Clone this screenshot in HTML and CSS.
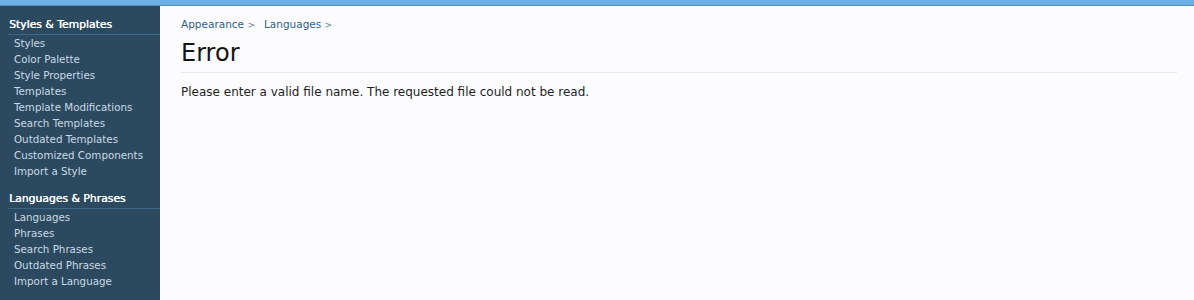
FILE: index.html
```html
<!DOCTYPE html>
<html>
<head>
<meta charset="utf-8">
<link rel="stylesheet" href="styles.css">
</head>
<body>
<div class="topbar"></div>
<div class="layout">
  <nav class="sidebar">
    <div class="section">
      <div class="section-title">Styles &amp; Templates</div>
      <ul class="links">
        <li>Styles</li>
        <li>Color Palette</li>
        <li>Style Properties</li>
        <li>Templates</li>
        <li>Template Modifications</li>
        <li>Search Templates</li>
        <li>Outdated Templates</li>
        <li>Customized Components</li>
        <li>Import a Style</li>
      </ul>
    </div>
    <div class="section">
      <div class="section-title">Languages &amp; Phrases</div>
      <ul class="links">
        <li>Languages</li>
        <li>Phrases</li>
        <li>Search Phrases</li>
        <li>Outdated Phrases</li>
        <li>Import a Language</li>
      </ul>
    </div>
  </nav>
  <main class="content">
    <div class="breadcrumb">
      <span class="crumb">Appearance <span class="arrow">&gt;</span></span>
      <span class="crumb">Languages <span class="arrow">&gt;</span></span>
    </div>
    <h1 class="title">Error</h1>
    <p class="message">Please enter a valid file name. The requested file could not be read.</p>
  </main>
</div>
</body>
</html>
```
FILE: styles.css
```css
html, body {
  margin: 0;
  padding: 0;
  height: 100%;
}
body {
  font-family: "DejaVu Sans", Verdana, sans-serif;
  background: #fcfcfe;
  overflow: hidden;
}
.topbar {
  height: 5px;
  background: #6cb1e6;
  border-bottom: 1px solid #5b8db4;
}
.layout {
  display: flex;
  height: 294px;
}
.sidebar {
  width: 160px;
  flex: none;
  background: #2c4a5f;
  padding-top: 11px;
  box-sizing: border-box;
}
.section {
  margin-bottom: 12px;
}
.section-title {
  color: #ffffff;
  font-size: 10.8px;
  line-height: 16px;
  padding-left: 1px;
  margin-left: 8px;
  text-shadow: 0.4px 0 0 #ffffff;
  border-bottom: 1px solid #3b6888;
  padding-bottom: 1px;
}
.links {
  list-style: none;
  margin: 0;
  padding: 0 0 0 14px;
}
.links li {
  color: #c9d9e5;
  font-size: 10.3px;
  line-height: 16px;
}
.content {
  flex: 1;
  padding: 10px 17px 0 21px;
  background: #fcfcfe;
}
.breadcrumb {
  font-size: 10.5px;
  line-height: 16px;
  color: #2f5f8c;
  display: flex;
  gap: 9px;
}
.arrow {
  font-size: 9px;
  color: #6a7c8a;
}
.title {
  margin: 6px 0 0 0;
  font-size: 24px;
  font-weight: normal;
  line-height: 28px;
  color: #141414;
  padding-bottom: 5px;
  border-bottom: 1px solid #e2eaef;
}
.message {
  margin: 11px 0 0 0;
  font-size: 12px;
  line-height: 16px;
  color: #1e1e1e;
}
```
